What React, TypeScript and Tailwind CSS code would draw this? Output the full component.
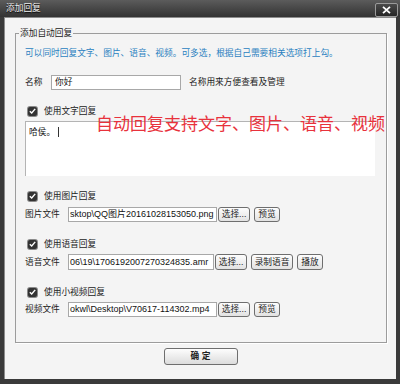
import React from "react";

const font = "font-['Liberation_Sans','Noto_Sans_CJK_SC',sans-serif]";

const Check = () => (
  <span className="flex h-[9px] w-[9px] items-center justify-center rounded-[2px] bg-[#333333] shadow-[0_0_0_1px_#8a8a8a]">
    <svg width="7" height="6" viewBox="0 0 7 6">
      <path d="M0.8 3.2 L2.7 5 L6.2 0.9" fill="none" stroke="#ffffff" strokeWidth="1.4" />
    </svg>
  </span>
);

const Btn = ({ label, w }: { label: string; w: string }) => (
  <button
    className={`flex h-full items-center justify-center rounded-[3px] border border-[#6e6e6e] bg-gradient-to-b from-[#fdfdfd] to-[#e2e2e2] text-[8.7px] leading-none text-[#222] ${w}`}
  >
    {label}
  </button>
);

const CheckRow = ({ label, mt }: { label: string; mt: string }) => (
  <div className={`flex h-[12px] items-center pl-[12px] ${mt}`}>
    <Check />
    <span className="ml-[7px] text-[8.7px] leading-none text-[#222]">{label}</span>
  </div>
);

type FileRowProps = {
  label: string;
  path: string;
  inputW: string;
  mt: string;
  h: string;
  buttons: { label: string; w: string }[];
};

const FileRow = (props: FileRowProps) => (
  <div className={`flex items-center pl-[9px] ${props.mt} ${props.h}`}>
    <span className="w-[43px] text-[8.7px] leading-none text-[#222]">{props.label}</span>
    <div
      className={`flex h-full items-center overflow-hidden whitespace-nowrap border border-[#a8a8a8] bg-white pl-[1px] text-[9px] leading-none text-[#111] ${props.inputW}`}
    >
      {props.path}
    </div>
    <div className="flex h-full items-center gap-[4px] pl-[1px]">
      {props.buttons.map((b) => (
        <Btn key={b.label} label={b.label} w={b.w} />
      ))}
    </div>
  </div>
);

export default function App() {
  return (
    <div className={`flex h-[384px] w-[400px] flex-col bg-[#3a3a3a] ${font}`}>
      {/* title bar */}
      <div className="flex h-[17px] items-start justify-between bg-gradient-to-b from-[#5c5c5c] to-[#333333] pl-[6px] pr-[2px]">
        <span className="pt-[4px] text-[8.7px] leading-none text-[#f0f0f0] [text-shadow:0_1px_1px_#000]">
          添加回复
        </span>
        <div className="mt-[3px] flex h-[14px] w-[23px] items-center justify-center rounded-[2px] border border-[#9a9a9a] bg-gradient-to-b from-[#4a4a4a] to-[#262626]">
          <svg width="9" height="8" viewBox="0 0 9 8">
            <path d="M1 0.8 L8 7.2 M8 0.8 L1 7.2" stroke="#ffffff" strokeWidth="1.8" />
          </svg>
        </div>
      </div>

      {/* client area */}
      <div className="mx-[4px] flex h-[362px] flex-col border-t border-l border-[#8c8c8c] bg-[#f4f4f4]">
        <div className="relative ml-[10px] mt-[15px] h-[310px] w-[372px] border border-[#9c9c9c] shadow-[1px_1px_0_#ffffff]">
          <span className="absolute left-[3px] top-[-7px] bg-[#f4f4f4] px-[1px] text-[8.7px] leading-[12px] text-[#222]">
            添加自动回复
          </span>

          <div className="ml-[9px] mt-[13px] h-[12px] text-[8.7px] leading-[12px] text-[#2a7fc0]">
            可以同时回复文字、图片、语音、视频。可多选，根据自己需要相关选项打上勾。
          </div>

          <div className="mt-[16px] flex h-[15px] items-center pl-[9px]">
            <span className="w-[26px] text-[8.7px] leading-none text-[#222]">名称</span>
            <div className="flex h-full w-[130px] items-center border border-[#a8a8a8] bg-white pl-[3px] text-[8.7px] leading-none text-[#111]">
              你好
            </div>
            <span className="ml-[8px] text-[8.7px] leading-none text-[#222]">名称用来方便查看及管理</span>
          </div>

          <CheckRow label="使用文字回复" mt="mt-[15px]" />
          <div className="ml-[9px] mt-[4px] flex h-[55px] w-[350px] items-start border-t border-l border-[#b4b4b4] bg-white pl-[3px] pt-[4px]">
            <span className="text-[8.7px] leading-[12px] text-[#111]">哈侯。</span>
            <span className="ml-[3px] mt-[1px] h-[10px] w-[1px] bg-[#333]" />
          </div>
          <span className="absolute left-[80px] top-[80px] text-[17px] leading-[22px] text-[#e8323c]">
            自动回复支持文字、图片、语音、视频
          </span>

          <CheckRow label="使用图片回复" mt="mt-[14px]" />
          <FileRow
            label="图片文件"
            path="sktop\QQ图片20161028153050.png"
            inputW="w-[149px]"
            mt="mt-[5px]"
            h="h-[15px]"
            buttons={[
              { label: "选择...", w: "w-[32px]" },
              { label: "预览", w: "w-[26px]" },
            ]}
          />

          <CheckRow label="使用语音回复" mt="mt-[16px]" />
          <FileRow
            label="语音文件"
            path="06\19\1706192007270324835.amr"
            inputW="w-[146px]"
            mt="mt-[4px]"
            h="h-[16px]"
            buttons={[
              { label: "选择...", w: "w-[32px]" },
              { label: "录制语音", w: "w-[42px]" },
              { label: "播放", w: "w-[26px]" },
            ]}
          />

          <CheckRow label="使用小视频回复" mt="mt-[16px]" />
          <FileRow
            label="视频文件"
            path="okwl\Desktop\V70617-114302.mp4"
            inputW="w-[149px]"
            mt="mt-[4px]"
            h="h-[15px]"
            buttons={[
              { label: "选择...", w: "w-[32px]" },
              { label: "预览", w: "w-[26px]" },
            ]}
          />
        </div>

        <div className="mt-[5px] flex justify-center">
          <button className="flex h-[17px] w-[74px] items-center justify-center rounded-[3px] border border-[#6e6e6e] bg-gradient-to-b from-[#fdfdfd] to-[#dcdcdc] text-[8.7px] font-bold leading-none text-[#222]">
            确 定
          </button>
        </div>
      </div>
    </div>
  );
}
